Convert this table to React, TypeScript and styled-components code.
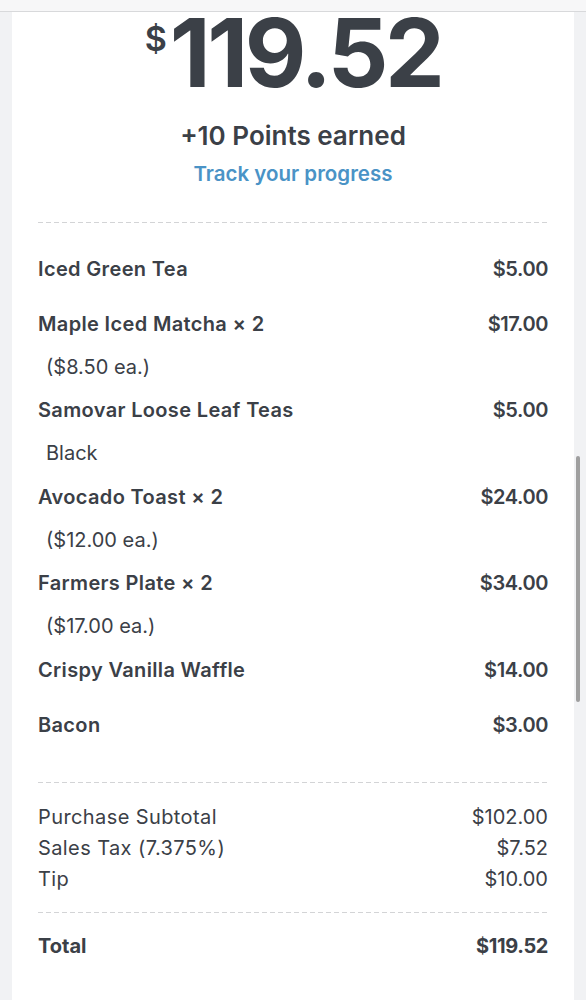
import React from "react";
import styled, { createGlobalStyle } from "styled-components";

type LineItem = {
  name: string;
  price: string;
  note?: string;
};

const items: LineItem[] = [
  { name: "Iced Green Tea", price: "$5.00" },
  { name: "Maple Iced Matcha × 2", price: "$17.00", note: "($8.50 ea.)" },
  { name: "Samovar Loose Leaf Teas", price: "$5.00", note: "Black" },
  { name: "Avocado Toast × 2", price: "$24.00", note: "($12.00 ea.)" },
  { name: "Farmers Plate × 2", price: "$34.00", note: "($17.00 ea.)" },
  { name: "Crispy Vanilla Waffle", price: "$14.00" },
  { name: "Bacon", price: "$3.00" },
];

const totals = [
  { label: "Purchase Subtotal", value: "$102.00" },
  { label: "Sales Tax (7.375%)", value: "$7.52" },
  { label: "Tip", value: "$10.00" },
];

const GlobalStyle = createGlobalStyle`
  body {
    margin: 0;
    background: #f1f2f4;
    font-family: Inter, "Liberation Sans", sans-serif;
    color: #3b4047;
  }
`;

const TopBar = styled.div`
  height: 11px;
  background: #f7f7f8;
  border-bottom: 1px solid #d8d9db;
`;

const Card = styled.main`
  margin: 0 12px;
  background: #fff;
  padding: 0 26px 60px;
  min-height: 988px;
  box-sizing: border-box;
`;

const Hero = styled.section`
  text-align: center;
`;

const Amount = styled.div`
  display: flex;
  justify-content: center;
  align-items: flex-start;
`;

const Currency = styled.span`
  font-size: 34px;
  font-weight: 600;
  line-height: 1;
  margin-top: 10px;
  margin-right: 3px;
`;

const Value = styled.span`
  font-size: 95px;
  font-weight: 700;
  line-height: 81px;
  letter-spacing: -3.5px;
`;

const Points = styled.div`
  margin-top: 27px;
  font-size: 26px;
  font-weight: 600;
  line-height: 32px;
`;

const TrackLink = styled.a`
  display: block;
  margin-top: 8px;
  font-size: 20.5px;
  font-weight: 600;
  line-height: 28px;
  color: #4a93c6;
  text-decoration: none;
`;

const Divider = styled.div<{ $gap: number }>`
  height: 1px;
  margin-top: ${(p) => p.$gap}px;
  background-image: linear-gradient(to right, #d3d4d6 60%, transparent 0);
  background-size: 8px 1px;
`;

const ItemList = styled.div`
  padding: 24px 0 24px;
`;

const Item = styled.div<{ $plain: boolean }>`
  margin-bottom: ${(p) => (p.$plain ? 12 : 0)}px;
`;

const Row = styled.div<{ $height: number; $weight: number }>`
  display: flex;
  justify-content: space-between;
  align-items: center;
  height: ${(p) => p.$height}px;
  font-size: 20px;
  font-weight: ${(p) => p.$weight};
`;

const Name = styled.span<{ $spacing: number }>`
  letter-spacing: ${(p) => p.$spacing}px;
`;

const Price = styled.span`
  letter-spacing: -0.4px;
`;

const Note = styled.div`
  height: 43.5px;
  display: flex;
  align-items: center;
  padding-left: 8px;
  font-size: 20px;
  font-weight: 400;
`;

const Totals = styled.div`
  padding: 18px 0;
`;

const TotalRow = styled(Row)`
  margin-top: 11px;
`;

const Scrollbar = styled.div`
  position: fixed;
  right: 6px;
  top: 456px;
  width: 4px;
  height: 246px;
  border-radius: 2px;
  background: #9f9f9f;
`;

export default function App() {
  return (
    <>
      <GlobalStyle />
      <TopBar />
      <Card>
        <Hero>
          <Amount>
            <Currency>$</Currency>
            <Value>119.52</Value>
          </Amount>
          <Points>+10 Points earned</Points>
          <TrackLink href="#progress">Track your progress</TrackLink>
        </Hero>
        <Divider $gap={34} />
        <ItemList>
          {items.map((item) => (
            <Item key={item.name} $plain={!item.note}>
              <Row $height={43} $weight={600}>
                <Name $spacing={0.35}>{item.name}</Name>
                <Price>{item.price}</Price>
              </Row>
              {item.note && <Note>{item.note}</Note>}
            </Item>
          ))}
        </ItemList>
        <Divider $gap={0} />
        <Totals>
          {totals.map((t) => (
            <Row key={t.label} $height={31} $weight={400}>
              <Name $spacing={0.4}>{t.label}</Name>
              <span>{t.value}</span>
            </Row>
          ))}
        </Totals>
        <Divider $gap={0} />
        <TotalRow $height={43} $weight={700}>
          <Name $spacing={0}>Total</Name>
          <Price>$119.52</Price>
        </TotalRow>
      </Card>
      <Scrollbar />
    </>
  );
}
